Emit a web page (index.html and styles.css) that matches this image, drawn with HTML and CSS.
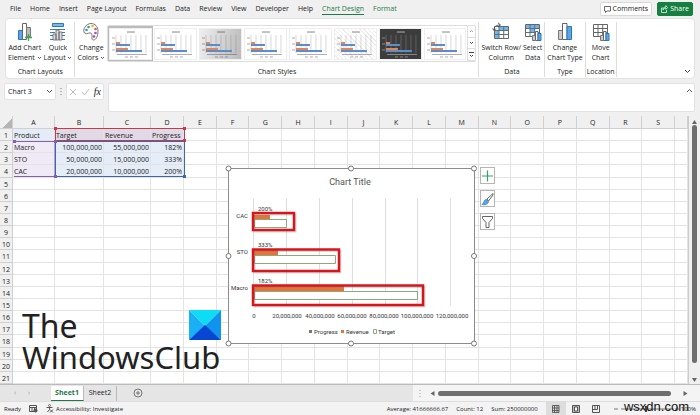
FILE: index.html
```html
<!DOCTYPE html>
<html lang="en">
<head>
<meta charset="utf-8">
<title>Chart Design</title>
<link rel="stylesheet" href="styles.css">
</head>
<body>
<svg class="defs" aria-hidden="true">
  <symbol id="mini" viewBox="0 0 41 30">
    <g stroke="currentColor" stroke-width=".5" opacity=".45"><path d="M6 6V24M11 6V24M16 6V24M21 6V24M26 6V24M31 6V24M36 6V24"/></g>
    <path d="M17 3h8" stroke="currentColor" stroke-width="1" opacity=".7"/>
    <path d="M2 9h3M2 15h3M2 21h3M7 25.500h30M15 28h3M20 28h3M25 28h3" stroke="currentColor" stroke-width=".7" opacity=".7"/>
    <path d="M6 13h4v2H6zM6 19h12v2H6z" fill="#e0875a"/>
    <path d="M6 15h14v2H6zM6 21h26v2H6z" fill="#5b8ccb"/>
  </symbol>
  <symbol id="down" viewBox="0 0 5 4"><path d="M1 1l1.500 1.500L4 1" fill="none" stroke="#444" stroke-width=".9"/></symbol>
</svg>

<header class="menu">
  <nav class="tabs">
    <a href="#">File</a><a href="#">Home</a><a href="#">Insert</a><a href="#">Page Layout</a><a href="#">Formulas</a><a href="#">Data</a><a href="#">Review</a><a href="#">View</a><a href="#">Developer</a><a href="#">Help</a><a href="#" class="green current">Chart Design</a><a href="#" class="green">Format</a>
  </nav>
  <button class="pill"><svg width="7" height="7" viewBox="0 0 7 7"><path d="M.5.5h6v4.500H3L1.500 6.500V5h-1z" fill="none" stroke="#444" stroke-width=".8"/></svg>Comments</button>
  <button class="pill share"><svg width="7" height="8" viewBox="0 0 7 8"><path d="M2.500 3H.5v4.500h5V5M2 5c0-2 1-3 3-3V.7L6.600 2.600 5 4.300V3C3.500 3 2.500 4 2 5z" fill="none" stroke="#fff" stroke-width=".7"/></svg>Share</button>
</header>

<section class="ribbon">
  <div class="group">
    <div class="tools">
      <button class="tool"><svg width="18" height="20" viewBox="0 0 18 20"><path d="M2.500 8.500h4v9h-4z" fill="#5ba7e6" stroke="#2878bd"/><path d="M6.500 1.500h4v16h-4z" fill="#fff" stroke="#666"/><path d="M10.500 5.500h4v9h-4z" fill="#bbb" stroke="#777"/><path d="M12.500 12v7M9 15.500h7" stroke="#36a852" stroke-width="1.300"/></svg>Add Chart<br>Element <svg class="caret"><use href="#down"/></svg></button>
      <button class="tool"><svg width="18" height="20" viewBox="0 0 18 20"><path d="M3.500 1.500h11v3h-11z" fill="#7db9e8" stroke="#2878bd"/><path d="M1 7.500h15M1 10.500h5M1 13.500h5M12 10.500h4M12 13.500h4M1 17.500h15" stroke="#3a82b5"/><path d="M4 12h3v6H4zM7 8h3v10H7zM10 10h3v8h-3z" fill="#ddd" stroke="#666" stroke-width=".8"/></svg>Quick<br>Layout <svg class="caret"><use href="#down"/></svg></button>
    </div>
    <h2>Chart Layouts</h2>
  </div>
  <div class="group styles">
    <div class="tools">
      <button class="tool"><svg width="18" height="20" viewBox="0 0 18 20"><path d="M9 1.500c4 0 7 3 7 7.500 0 5-2 9-4.500 9-3 0-.5-4-2-6.500C8 9.500 5 13 2.500 11 0 8 4 1.500 9 1.500z" fill="#fff" stroke="#666" stroke-width=".9"/><circle cx="4.500" cy="8" r="1.300" fill="#3a8dde"/><circle cx="6.500" cy="5" r="1.300" fill="#3aa55c"/><circle cx="10.500" cy="4" r="1.300" fill="#edae3a"/><circle cx="13.500" cy="7" r="1.300" fill="#e2574c"/><circle cx="13.500" cy="11" r="1.300" fill="#9254c8"/><circle cx="12" cy="14.500" r="1.300" fill="#c04a88"/></svg>Change<br>Colors <svg class="caret"><use href="#down"/></svg></button>
      <div class="gallery">
        <button class="thumb selected" aria-label="Style 1"><svg><use href="#mini"/></svg></button>
        <button class="thumb" aria-label="Style 2"><svg><use href="#mini"/></svg></button>
        <button class="thumb grey" aria-label="Style 3"><svg><use href="#mini"/></svg></button>
        <button class="thumb" aria-label="Style 4"><svg><use href="#mini"/></svg></button>
        <button class="thumb" aria-label="Style 5"><svg><use href="#mini"/></svg></button>
        <button class="thumb mesh" aria-label="Style 6"><svg><use href="#mini"/></svg></button>
        <button class="thumb dark" aria-label="Style 7"><svg><use href="#mini"/></svg></button>
        <button class="thumb" aria-label="Style 8"><svg><use href="#mini"/></svg></button>
        <div class="stepper">
          <button aria-label="Previous styles"><svg width="5" height="4"><path d="M1 3l1.500-1.500L4 3" fill="none" stroke="#aaa"/></svg></button>
          <button aria-label="Next styles"><svg width="5" height="4"><path d="M1 1l1.500 1.500L4 1" fill="none" stroke="#444"/></svg></button>
          <button aria-label="All styles"><svg width="5" height="6"><path d="M0 .5h5M1 3l1.500 1.500L4 3" fill="none" stroke="#444"/></svg></button>
        </div>
      </div>
    </div>
    <h2>Chart Styles</h2>
  </div>
  <div class="group">
    <div class="tools">
      <button class="tool"><svg width="18" height="20" viewBox="0 0 18 20"><path d="M2.500 4.500h14v12h-14z" fill="#fff" stroke="#666"/><path d="M7 5h9v4H7zM3 9h4v7H3z" fill="#70b5ea"/><path d="M2.500 8.500h14M2.500 12.500h14M7 4.500v12M11.700 4.500v12" stroke="#5d6d7a" fill="none"/><path d="M2 8c0-3 2-5 6-5M6 .8L8.500 3 6 5.200M.5 6.500L2 8.500l2-2" stroke="#444" fill="none" stroke-width=".9"/></svg>Switch Row/<br>Column</button>
      <button class="tool"><svg width="18" height="20" viewBox="0 0 18 20"><path d="M1.500 2.500h14v12h-14z" fill="#fff" stroke="#666"/><path d="M2 3h13v4H2zM6 7h5v4H6z" fill="#70b5ea"/><path d="M1.500 6.500h14M1.500 10.500h14M6 2.500v12M10.700 2.500v12" stroke="#5d6d7a" fill="none"/><path d="M8.500 13.500h3v5h-3z" fill="#ccc" stroke="#777"/><path d="M11.500 9.500h2.500v9h-2.500z" fill="#fff" stroke="#666"/><path d="M14 11.500h3v7h-3z" fill="#5ba7e6" stroke="#2878bd"/></svg>Select<br>Data</button>
    </div>
    <h2>Data</h2>
  </div>
  <div class="group">
    <div class="tools">
      <button class="tool"><svg width="18" height="20" viewBox="0 0 18 20"><path d="M2.500 8.500h4v9h-4z" fill="#ccc" stroke="#777"/><path d="M6.500 1.500h4.500v16H6.500z" fill="#fff" stroke="#666"/><path d="M11 4.500h4.500v13H11z" fill="#5ba7e6" stroke="#2878bd"/></svg>Change<br>Chart Type</button>
    </div>
    <h2>Type</h2>
  </div>
  <div class="group last">
    <div class="tools">
      <button class="tool"><svg width="18" height="20" viewBox="0 0 18 20"><path d="M1.500 2.500h14v12h-14zM1.500 6.500h14M1.500 10.500h14M6 2.500v12M10.700 2.500v12" fill="#fff" stroke="#666"/><path d="M8.500 13.500h3v5h-3z" fill="#ccc" stroke="#777"/><path d="M11.500 9.500h2.500v9h-2.500z" fill="#fff" stroke="#666"/><path d="M14 11.500h3v7h-3z" fill="#5ba7e6" stroke="#2878bd"/></svg>Move<br>Chart</button>
    </div>
    <h2>Location</h2>
  </div>
  <button class="collapse" aria-label="Collapse ribbon"><svg width="7" height="5"><path d="M1 1l2.500 2.500L6 1" fill="none" stroke="#444"/></svg></button>
</section>

<section class="formula">
  <button class="name">Chart 3<svg width="7" height="5"><path d="M1 1l2.500 2.500L6 1" fill="none" stroke="#555"/></svg></button>
  <svg width="2" height="9"><path d="M1 1v7" stroke="#777" stroke-dasharray="1 2"/></svg>
  <div class="entry">
    <button aria-label="Cancel"><svg width="8" height="8"><path d="M1 1l6 6M7 1L1 7" stroke="#bbb"/></svg></button>
    <button aria-label="Enter"><svg width="9" height="8"><path d="M1 4l2.500 3L8 1" fill="none" stroke="#bbb"/></svg></button>
    <button class="fx" aria-label="Insert function"><i>fx</i></button>
  </div>
  <div class="bar"><input type="text" aria-label="Formula bar"><svg width="7" height="5"><path d="M1 4l2.500-2.500L6 4" fill="none" stroke="#555"/></svg></div>
</section>

<main class="sheet">
  <table class="grid" id="grid"></table>
  <div class="vscroll"><svg width="7" height="6"><path d="M3.500 1L6 5H1z" fill="#666"/></svg><div class="thumbbar"></div><svg width="7" height="6"><path d="M3.500 5L6 1H1z" fill="#666"/></svg></div>

  <svg class="ranges" width="178" height="64" aria-hidden="true">
    <path d="M4 25.500h41v35H4" fill="none" stroke="#8260b0"/>
    <path d="M45.500 25.500h129v35h-129z" fill="none" stroke="#3f66ad"/>
    <path d="M45.500 12.500h129v12h-129z" fill="none" stroke="#c23b48"/>
    <path d="M3 24h3v3H3zM44 24h3v3h-3zM44 59h3v3h-3z" fill="#8260b0"/>
    <path d="M173 59h3v3h-3z" fill="#3f66ad"/>
    <path d="M44 11h3v3h-3zM173 11h3v3h-3zM173 23h3v3h-3z" fill="#c23b48"/>
  </svg>

  <svg class="chart" width="252" height="182" viewBox="225 165 252 182" role="img" aria-label="Chart Title">
    <path d="M228.500 168.500h246v175h-246z" fill="#fff" stroke="#8c8c8c"/>
    <path d="M286.500 198v108M319.500 198v108M352.500 198v108M385.500 198v108M417.500 198v108M450.500 198v108M253.500 198v108" stroke="#dedede"/>
    <text class="title" x="350" y="185" text-anchor="middle">Chart Title</text>
    <path d="M254 215h16v5h-16zM254 250h24v5h-24zM254 286h90v5.500h-90z" fill="#e5743a"/>
    <path d="M254.500 219.500h32v8h-32zM254.500 255.500h81v8h-81zM254.500 291.500h163v8h-163z" fill="#fff" stroke="#8ba97e"/>
    <g fill="none" stroke="#777" stroke-opacity=".3" stroke-width="2"><path d="M254.500 214.500h41v17h-41zM254.500 251h86v21.500h-86zM254.500 287h170v19.500h-170z"/></g>
    <g fill="none" stroke="#d9151c" stroke-width="2.500"><path d="M253 213h41v17h-41zM253 249.500h86v21.500h-86zM253 285.500h170v19.500h-170z"/></g>
    <g><text x="258" y="211">200%</text><text x="258" y="247">333%</text><text x="258" y="283">182%</text></g>
    <g text-anchor="end"><text x="248" y="218">CAC</text><text x="248" y="254">STO</text><text x="248" y="290">Macro</text></g>
    <g text-anchor="middle"><text x="254" y="318">0</text><text x="287" y="318">20,000,000</text><text x="320" y="318">40,000,000</text><text x="352" y="318">60,000,000</text><text x="384" y="318">80,000,000</text><text x="417" y="318">100,000,000</text><text x="452" y="318">120,000,000</text></g>
    <path d="M309 330h3v3h-3z" fill="#777"/><path d="M341 330h3v3h-3z" fill="#e5743a"/><path d="M373.500 329.500h3v4h-3z" fill="#fff" stroke="#8ba97e"/>
    <text x="314" y="334">Progress</text><text x="346" y="334">Revenue</text><text x="378" y="334">Target</text>
    <g fill="#fff" stroke="#777"><circle cx="228.500" cy="168.500" r="2.500"/><circle cx="351" cy="168.500" r="2.500"/><circle cx="474" cy="168.500" r="2.500"/><circle cx="228.500" cy="256" r="2.500"/><circle cx="474" cy="256" r="2.500"/><circle cx="228.500" cy="343.500" r="2.500"/><circle cx="351" cy="343.500" r="2.500"/><circle cx="474" cy="343.500" r="2.500"/></g>
  </svg>
  <div class="chart-buttons">
    <button aria-label="Chart elements"><svg width="13" height="14"><path d="M6.500 1.500v11M1 7h11" stroke="#3ba068" stroke-width="1.200"/></svg></button>
    <button aria-label="Chart styles"><svg width="13" height="14"><path d="M12 1.500L6 7l1.500 2L12 3z" fill="#fff" stroke="#555" stroke-width=".9"/><path d="M5.500 7.500c-3 0-2 3.500-4.500 5 3 .8 6.500-.5 6.500-3z" fill="#5ba7e6" stroke="#2878bd" stroke-width=".7"/></svg></button>
    <button aria-label="Chart filters"><svg width="13" height="14"><path d="M1.500 1.500h10v2L8 7.500v5H5v-5L1.500 3.500z" fill="#fff" stroke="#555" stroke-width=".9"/></svg></button>
  </div>
  <div class="logo">
    <span>The</span><svg width="32" height="30" viewBox="0 0 32 30"><path d="M0 0h32L16 16z" fill="#0cdcf4"/><path d="M0 0v30l16-14z" fill="#1bb0f5"/><path d="M32 0v30L16 16z" fill="#0f93ee"/><path d="M0 30h32L16 15z" fill="#0646d2"/></svg>
    <span class="second">WindowsClub</span>
  </div>
</main>

<footer class="sheets">
  <button class="arrow" aria-label="Previous sheet">‹</button><button class="arrow" aria-label="Next sheet">›</button>
  <button class="sheet-tab active">Sheet1</button><button class="sheet-tab">Sheet2</button>
  <button class="add" aria-label="New sheet"><svg width="10" height="10"><circle cx="5" cy="5" r="4" fill="none" stroke="#777"/><path d="M5 3v4M3 5h4" stroke="#777"/></svg></button>
  <div class="hscroll"><svg width="2" height="8"><path d="M1 1v7" stroke="#999" stroke-dasharray="1 2"/></svg><svg class="left" width="5" height="7"><path d="M4.500 1v5L.5 3.500z" fill="#666"/></svg><div class="track"><div class="thumbbar"></div></div><svg width="5" height="7"><path d="M.5 1v5l4-2.500z" fill="#666"/></svg></div>
</footer>
<footer class="status">
  <span>Ready</span>
  <svg width="9" height="8"><path d="M.5.5h7v6h-7zM.5 2.500h7M3 2.500v4M5.500 2.500v4" fill="none" stroke="#555"/><circle cx="6.500" cy="5.500" r="2" fill="#555"/></svg>
  <span class="access"><svg width="8" height="9"><circle cx="3.500" cy="1.500" r="1" fill="none" stroke="#555" stroke-width=".8"/><path d="M.5 3.500h6M3.500 3.500v2L1.500 8M4 5.500l3 3M7 5.500l-3 3" fill="none" stroke="#555"/></svg>Accessibility: Investigate</span>
  <span class="push">Average: 41666666.67</span><span>Count: 12</span><span>Sum: 250000000</span>
  <div class="views">
    <button class="on" aria-label="Normal"><svg width="8" height="8"><path d="M.5.5h6.500v7H.5zM.5 3h6.500M.5 5.500h6.500M2.500.5v7M5 .5v7" fill="none" stroke="#555" stroke-width=".9"/></svg></button>
    <button aria-label="Page layout"><svg width="8" height="8"><path d="M.5.5h7v7h-7z" fill="#bbb" stroke="#555"/><path d="M2.500 2h3v4h-3z" fill="#fff" stroke="#555"/></svg></button>
    <button aria-label="Page break"><svg width="8" height="8"><path d="M.5.5h7v7h-7zM3 .5v4M5.500.5v4M.5 4.500h5" fill="none" stroke="#555"/></svg></button>
  </div>
  <div class="zoom"><svg width="66" height="8"><path d="M0 4h4M7 4h53M61 4h4M63 2v4" stroke="#777"/><path d="M31 1h2v6h-2z" fill="#444"/></svg><span>100%</span></div>
  <div class="site">wsxdn.com</div>
</footer>
<script src="grid.js"></script>
</body>
</html>
```
FILE: styles.css
```css
* { box-sizing: border-box; }
body {
  margin: 0; height: 100vh; display: flex; flex-direction: column; overflow: hidden;
  background: #f0f0f0; color: #222;
  font: 7px/10px "Open Sans", Roboto, sans-serif;
}
button { border: 0; padding: 0; margin: 0; background: none; color: inherit; font: inherit; }
svg { display: block; flex: none; }
.defs { position: absolute; width: 0; height: 0; }

.menu { display: flex; align-items: center; height: 18px; flex: none; padding: 0 7px 0 10px; gap: 5px; }
.tabs { display: flex; gap: 9px; flex: 1; }
.tabs a { color: inherit; text-decoration: none; line-height: 11px; border-bottom: 1px solid transparent; white-space: nowrap; }
.tabs .green { color: #1e7a48; }
.tabs .current { border-color: #1e7a48; }
.pill { display: flex; align-items: center; gap: 2px; height: 14px; padding: 0 3px; background: #fff; border: 1px solid #d8d8d8; border-radius: 2px; }
.share { background: #15803f; border-color: #15803f; color: #fff; }

.ribbon { position: relative; display: flex; flex: none; height: 61px; margin: 0 5px; padding: 3px 0 1px; background: #fff; border: 1px solid #e2e2e2; border-radius: 4px; }
.group { display: flex; flex-direction: column; padding: 0 2px; border-right: 1px solid #ddd; }
.group.last { padding: 0 1px; }
.group h2 { margin: auto 0 0; font-size: 7px; font-weight: 400; line-height: 10px; text-align: center; }
.tools { display: flex; gap: 2px; justify-content: center; }
.tool { line-height: 10px; text-align: center; white-space: nowrap; }
.tool svg { margin: 0 auto 1px; }
.tool .caret { display: inline-block; width: 5px; height: 4px; margin: 0; }
.styles { flex: 0 1 404px; }
.gallery { display: flex; flex: 1; height: 37px; margin-top: 3px; border: 1px solid #ddd; border-radius: 2px; }
.thumb { flex: 1; padding: 2px; }
.thumb svg { width: 100%; height: 30px; background: #fff; color: #555; outline: 1px solid #eee; }
.thumb.selected { padding: 0; border: 2px solid #bbb; }
.grey svg { background: linear-gradient(100deg, #eee, #bbb); }
.mesh svg { background: repeating-linear-gradient(45deg, #fff 0 2px, #eee 2px 3px); }
.dark svg { background: #3c3c3c; color: #ddd; }
.stepper { display: flex; flex-direction: column; width: 8px; border-left: 1px solid #ddd; }
.stepper button { flex: 1; display: grid; place-items: center; border-bottom: 1px solid #ddd; }
.collapse { margin: auto 3px 3px auto; }

.formula { display: flex; flex: none; gap: 4px; height: 37px; padding: 4px 5px 4px 4px; }
.name, .entry { display: flex; align-items: center; height: 17px; background: #fff; border: 1px solid #e2e2e2; border-radius: 2px; }
.name { width: 52px; justify-content: space-between; padding: 0 2px 0 3px; }
.formula > svg { margin-top: 4px; }
.entry { width: 38px; justify-content: space-around; }
.fx { font: 10px/12px "Liberation Serif", serif; }
.bar { display: flex; flex: 1; background: #fff; border: 1px solid #e2e2e2; border-radius: 2px; padding: 4px 1px; }
.bar input { flex: 1; min-width: 0; border: 0; padding: 0; background: none; font: inherit; }

.sheet { position: relative; display: flex; flex: 1; min-height: 0; }
.grid { flex: 1; display: grid; grid-template-columns: 13px 42px 49px 47px 33px repeat(15, minmax(0, 1fr)) 13px; grid-template-rows: 13px repeat(21, minmax(0, 1fr)); background: #fff; border-right: 1px solid #ccc; }
.grid tbody, .grid tr { display: contents; }
.grid th { padding: 0; overflow: hidden; font-weight: 400; line-height: 13px; background: #f0f0f0; border-right: 1px solid #d0d0d0; border-bottom: 1px solid #d0d0d0; text-align: center; }
.grid td { padding: 0 1px; overflow: hidden; line-height: 13px; white-space: nowrap; border-right: 1px solid #e3e3e3; border-bottom: 1px solid #e3e3e3; }
.grid .head-a { background: #e4ecf8; }
.grid .head { background: #e2d9e6; }
.grid .cat { background: #f0e9f6; }
.grid .val { background: #e4edf8; text-align: right; }
.grid .corner { background: linear-gradient(135deg, #f0f0f0 60%, #b5b5b5 60%); }
.vscroll { display: flex; flex-direction: column; align-items: center; width: 11px; padding: 3px 0 1px; }
.thumbbar { background: #6e6e6e; border-radius: 3px; }
.vscroll .thumbbar { width: 5px; height: 238px; margin-bottom: auto; }
.ranges { position: absolute; left: 10px; top: 0; }
.chart { position: absolute; left: 225px; top: 49px; font-family: Roboto, sans-serif; font-size: 6px; fill: #333; }
.chart .title { font-size: 9px; fill: #555; }
.chart-buttons { position: absolute; left: 480px; top: 51px; display: grid; gap: 6px; }
.chart-buttons button { width: 15px; height: 17px; padding: 0; display: grid; place-items: center; background: #fff; border: 1px solid #b5b5b5; }
.logo { position: absolute; left: 22px; top: 194px; width: 199px; display: flex; flex-wrap: wrap; justify-content: space-between; color: #222; font: 32px/32px "Noto Sans", sans-serif; }
.logo .second { font-size: 31px; line-height: 30px; }

.sheets { display: flex; align-items: center; flex: none; height: 17px; background: #e5e5e5; border-top: 1px solid #bbb; }
.arrow { width: 14px; color: #999; }
.arrow:first-child { margin-left: 8px; }
.sheet-tab { width: 33px; height: 15px; border-right: 1px solid #bbb; }
.sheet-tab.active { margin-left: 15px; background: #fff; color: #1e7a48; font-weight: 700; border-bottom: 1px solid #1e7a48; }
.add { margin-left: 16px; }
.hscroll { display: flex; align-items: center; flex: 0 0 287px; height: 16px; margin-left: auto; padding: 0 12px 0 6px; background: #f4f4f4; }
.hscroll .left { margin: 0 3px 0 9px; }
.track { flex: 1; }
.hscroll .thumbbar { height: 5px; width: 95%; }
.status { position: relative; display: flex; align-items: center; flex: none; gap: 8px; height: 14px; padding: 0 4px; background: #f3f3f3; border-top: 1px solid #ddd; font-size: 6px; white-space: nowrap; }
.access { display: flex; gap: 2px; align-items: center; }
.push { margin-left: auto; }
.views { display: flex; height: 13px; }
.views button { width: 20px; display: grid; place-items: center; }
.views .on { background: #ddd; }
.zoom { display: flex; align-items: center; gap: 1px; }
.site { position: absolute; right: 11px; top: -3px; color: #111; font: 13px/15px "Liberation Sans", sans-serif; }
```
FILE: grid.js
```js
const data = [
  ["Product", "Target", "Revenue", "Progress"],
  ["Macro", "100,000,000", "55,000,000", "182%"],
  ["STO", "50,000,000", "15,000,000", "333%"],
  ["CAC", "20,000,000", "10,000,000", "200%"]
];
const letters = "ABCDEFGHIJKLMNOPQRS".split("").concat("");
const kind = (r, c) => r > 3 || c > 3 ? "" : r === 0 ? (c ? "head" : "head-a") : (c ? "val" : "cat");
let html = '<tr><th class="corner"></th>' + letters.map(l => `<th>${l}</th>`).join("") + "</tr>";
for (let r = 0; r < 21; r++) {
  html += `<tr><th>${r + 1}</th>` + letters.map((l, c) => `<td class="${kind(r, c)}">${(data[r] || [])[c] || ""}</td>`).join("") + "</tr>";
}
document.getElementById("grid").innerHTML = "<tbody>" + html + "</tbody>";
```
